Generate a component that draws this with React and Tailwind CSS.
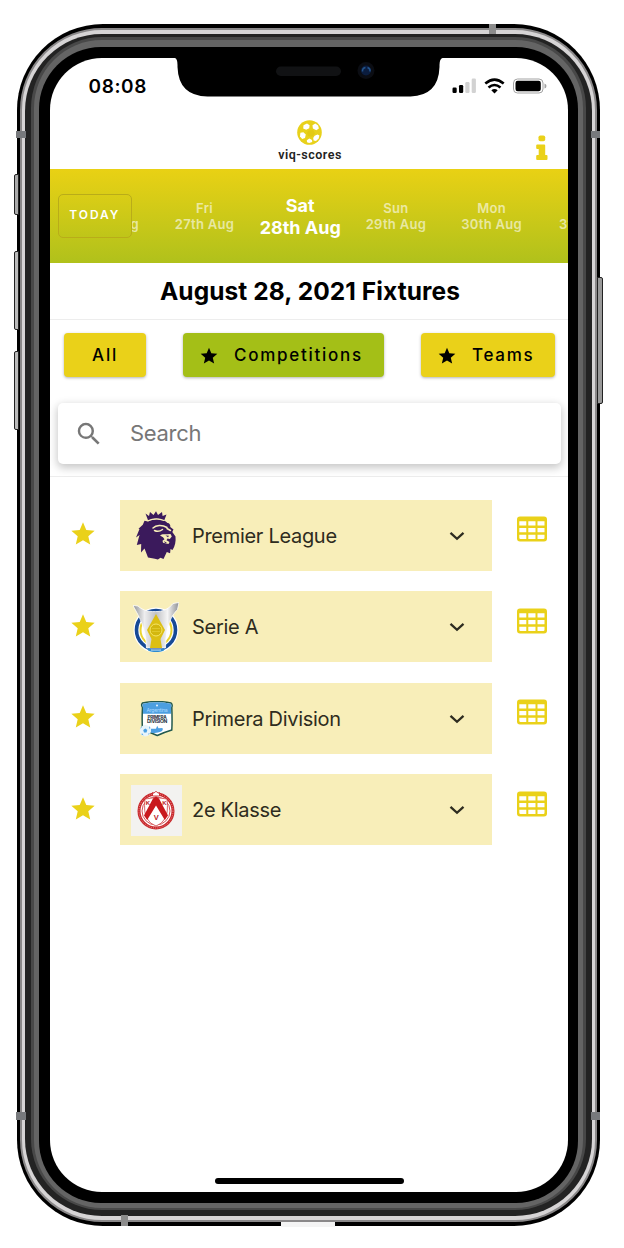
import React from "react";
import { MdStar, MdSearch } from "react-icons/md";

function BallLogo() {
  return (
    <svg viewBox="0 0 25 25" className="h-[25px] w-[25px]">
      <circle cx="12.5" cy="12.5" r="12.3" fill="#e8d11b" />
      <g fill="#fff">
        <path d="M6.500 5.200 10 3.400l2.600 1.800-.4 3-3 1.600-3-1.200z" />
        <path d="m15.500 5.200 2.800-1.600 2.800 2 .8 3-2.600 1.600-3.400-1.800z" />
        <path d="m3.400 12.800 3-.6 2.400 2.400-.8 3.400-2.800 1-2.200-2.600z" />
        <path d="m17.600 15.800 3-1.200 1.800.8-.8 3-2.600 2.600-2.400-.6-.4-2.400z" />
        <path d="m9.800 20.200 2.600-1.600 2.600 1.400.2 2-3 1-2.200-.8z" />
      </g>
      <path d="m11.500 10.500 4.500-.5 2 3.500-2.800 3.300-4.200-.8-1-3.200z" fill="#e3ca12" />
    </svg>
  );
}

function InfoIcon() {
  return (
    <svg viewBox="0 0 12 26" className="absolute top-[18.500px] right-[20px] h-[26px] w-[12px]" fill="#ead119">
      <rect x="2.500" y=".5" width="6.700" height="5.800" rx="1.800" />
      <path d="M1.200 9.500h7q1 0 1 1V20h1.300q1 0 1 1v3q0 1-1 1H1.200q-1 0-1-1v-3q0-1 1-1h1.500v-6H1.200q-1 0-1-1v-2.500q0-1 1-1z" />
    </svg>
  );
}

function ChevronDown() {
  return (
    <svg viewBox="0 0 16 10" className="mr-[27.500px] h-[10px] w-[16px]">
      <path d="m1.500 1.800 6.500 6 6.500-6" fill="none" stroke="#2e2c20" strokeWidth="2.300" />
    </svg>
  );
}

function PremierLogo() {
  return (
    <svg viewBox="0 0 40 49" className="h-[49px] w-[40px]">
      <g fill="#3b1a5c">
        <path d="M9.500 2.500 13 5l1-4 3.500 3L20 .2l2 3.800L26 1l.6 4 3.900-1.600-2.300 6.100c-5-2.400-11-2.200-16 .2z" />
        <path d="M12 10.500C18 7.200 27 7.300 31.500 12c2 .2 3 1.500 2.800 4l3.200 2.500-1.200 2.500 3.200 4.500c.5 5-.5 9.500-3 13.500l-2-1-.4 4.300-3.300-1.300-3.300 7-3-1.200-2.600 1.700-3-.8-6.900-1.200-3.500-9-3.500 4 .2-8.500L.8 34l2.700-10L0 26.500 3.500 18l-1-.2 4.300-4 1.700-4z" />
      </g>
      <g fill="none" stroke="#f8eeb8" strokeLinecap="round" strokeLinejoin="round">
        <path d="M12 9.800c5-2.400 11-2.500 16-.3" strokeWidth="1.200" />
        <path d="M17 17c3-3 9-3.600 14-.5M18.500 19.500c3 1.500 6 .5 8-1M31 17.500l3.500 2" strokeWidth="1.500" />
      </g>
      <path d="M24 24.500c2-2 4.500-1.200 7-1.200l3.500-.3 1.300 2.500-2 2.500-2.300-.5-1 1.700 3 1.800-1 2-5.500-1.200-.5-2 2-1.600-1.500-2z" fill="#f8eeb8" />
      <path d="m29.500 24.500 3.500.2-1 1.500zM28 30l3 2-2 0z" fill="#3b1a5c" />
    </svg>
  );
}

function SerieLogo() {
  return (
    <svg viewBox="0 0 46 50" className="h-[50px] w-[46px]">
      <defs>
        <linearGradient id="silver" x1="0" x2="1">
          <stop offset="0" stopColor="#8f9297" />
          <stop offset=".25" stopColor="#eeeeef" />
          <stop offset=".5" stopColor="#c0c1c4" />
          <stop offset=".75" stopColor="#f5f5f5" />
          <stop offset="1" stopColor="#8b8d92" />
        </linearGradient>
      </defs>
      <circle cx="23" cy="28" r="20" fill="#fff" stroke="#fff" strokeWidth="5" />
      <circle cx="23" cy="28" r="19.500" fill="none" stroke="#174a96" strokeWidth="3.600" />
      <circle cx="23" cy="28" r="15.500" fill="#fff" stroke="#ead432" strokeWidth="2" />
      <path d="M0 3.500 5 4c5 5 13 6 20 5.500 7-.5 12-4 15-8L46 .5l-1.500 7c-6 6.500-11.500 15-12 38.500h-19C13 30 9 20 3.500 10z" fill="url(#silver)" stroke="#fff" strokeWidth=".8" />
      <path d="m23 12 9 16-4.500 9 1.500 9H17l1.500-9L14 28z" fill="#dcbf14" />
      <circle cx="23" cy="28" r="6" fill="#d3b70f" stroke="#f5e567" strokeWidth="1" />
      <path d="M19 26.500h8M19 29.500h8" stroke="#e7d33c" strokeWidth=".6" />
      <path d="M15 46c5 2 11 2 16 0v2.500c-5 2-11 2-16 0z" fill="#2c8bd0" />
      <path d="M18 48h10" stroke="#fff" strokeWidth=".8" />
    </svg>
  );
}

function PrimeraLogo() {
  return (
    <svg viewBox="0 0 34 36" className="h-[36px] w-[34px]">
      <path d="M3.500 2Q18-1 32 2q1.800 1.500.8 4.500.5 14 0 22.500c-5 1.500-8 2.500-14.500 5.500C13 32 8 30.500 3.500 29c-.5-8-.4-16 0-22.500Q1.800 4 3.500 2z" fill="#fff" stroke="#22594e" strokeWidth="1.500" />
      <path d="M4 2.700Q18-.2 31.500 2.700q1.400 1.500.5 4v6H4v-6q-1-2.500 0-4z" fill="#4c9fe0" />
      <circle cx="18" cy="4.500" r="1" fill="#e5f4ff" />
      <text x="18" y="10.500" textAnchor="middle" fontSize="5.200" fill="#a9d8ff" fontFamily="Inter, sans-serif">Argentina</text>
      <text x="18" y="17.500" textAnchor="middle" textLength="19" lengthAdjust="spacingAndGlyphs" fontSize="4.800" fontWeight="700" fill="#26303c" fontFamily="Inter, sans-serif">PRIMERA</text>
      <text x="18" y="21.800" textAnchor="middle" textLength="20" lengthAdjust="spacingAndGlyphs" fontSize="4.800" fontWeight="700" fill="#26303c" fontFamily="Inter, sans-serif">DIVISION</text>
      <path d="M12 27.800h5l1.200-3 1.300 2.500 4-.2.300 1.800-1.500 1.700q-6 2.500-10.500.8z" fill="#4b9ee2" />
      <circle cx="6.300" cy="29.700" r="5.700" fill="#e7f4fb" />
      <path d="m6.300 27.500 2 1.600-.8 2.400H5l-.8-2.400zM1 28l1.500-1.500L3 24.500M10 25l1.500 2-1 1zM2 33l1.500-.5 1 2zM9 34l.5-1.500 1.500-.5z" fill="#499fe1" />
    </svg>
  );
}

function KlasseLogo() {
  return (
    <div className="flex h-[51px] w-[51px] items-center justify-center bg-[#f3f2f0]">
      <svg viewBox="0 0 38 40" className="h-[40px] w-[38px]">
        <circle cx="19" cy="21" r="17" fill="#fff" stroke="#c9282c" strokeWidth="3" />
        <circle cx="19" cy="21" r="17" fill="none" stroke="#f0b4b2" strokeWidth=".7" strokeDasharray="1 1.200" />
        <circle cx="19" cy="21" r="14" fill="none" stroke="#c9282c" strokeWidth=".8" />
        <path d="M15.500 6V2.500l1.500.7 2-2 2 2 1.500-.7V6z" fill="#fff" stroke="#c9282c" strokeWidth=".9" />
        <path d="M8 9q11-3 22 0 1.500 14-2 19.500Q25 34 19 36q-6-2-9-7.500Q6.500 23 8 9z" fill="#fff" stroke="#c9282c" strokeWidth=".7" />
        <path d="m16 8.500 3-2 3 2 9 17-3.200 4.500L19 15.500 10.200 30 7 25.500z" fill="#c9191e" />
        <g fill="#b92025" fontFamily="Liberation Sans, sans-serif" fontWeight="700" textAnchor="middle">
          <text x="10.800" y="15" fontSize="6">K</text>
          <text x="27.200" y="15" fontSize="6">K</text>
          <text x="19" y="29.500" fontSize="7.500">V</text>
        </g>
      </svg>
    </div>
  );
}

function TableIcon() {
  return (
    <svg viewBox="0 0 30 26" className="h-[26px] w-[30px]">
      <rect x="0" y=".5" width="30" height="25" rx="3" fill="#ead119" />
      <g fill="#fff">
        <path d="M2.300 5.200h7v4.300h-7zM11.300 5.200h7.200v4.300h-7.200zM20.500 5.200h7v4.300h-7z" />
        <path d="M2.300 12h7v4.300h-7zM11.300 12h7.200v4.300h-7.200zM20.500 12h7v4.300h-7z" />
        <path d="M2.300 18.700h7V23H3.500q-1.200 0-1.200-1.200zM11.300 18.700h7.200V23h-7.200zM20.500 18.700h7v3.100q0 1.200-1.200 1.200h-5.800z" />
      </g>
    </svg>
  );
}

const days = [
  { day: "Thu", date: "26th Aug" },
  { day: "Fri", date: "27th Aug" },
  { day: "Sat", date: "28th Aug", active: true },
  { day: "Sun", date: "29th Aug" },
  { day: "Mon", date: "30th Aug" },
  { day: "Tue", date: "31st Aug" },
];

const leagues = [
  { name: "Premier League", Logo: PremierLogo },
  { name: "Serie A", Logo: SerieLogo },
  { name: "Primera Division", Logo: PrimeraLogo },
  { name: "2e Klasse", Logo: KlasseLogo },
];

function StatusBar() {
  return (
    <div className="relative h-[58px] shrink-0">
      <svg viewBox="0 0 518 58" className="absolute top-0 left-0 h-[58px] w-[518px]">
        <path d="M123 0h2q2.500 1 2.500 7v2q1 29 30 29.500h203q28-1 29-29.500V7q0-6 3-7z" fill="#000" />
        <rect x="226" y="8.500" width="65" height="9.500" rx="4.750" fill="#111214" />
        <circle cx="316" cy="12.500" r="8.500" fill="#0b0d13" />
        <circle cx="316" cy="12.500" r="5" fill="#0b1d3f" />
        <path d="M312.500 13.500a3.800 3.800 0 0 1 3-4M317.500 9.500q3 1 2.500 4" fill="none" stroke="#23538a" strokeWidth="1.500" />
        <rect x="402.500" y="29.500" width="4.200" height="5.500" rx="1.200" />
        <rect x="409" y="27" width="4.200" height="8" rx="1.200" />
        <rect x="415.300" y="24" width="4.200" height="11" rx="1.200" fill="#d2d2d2" />
        <rect x="421.700" y="20.500" width="4.200" height="14.500" rx="1.200" fill="#d2d2d2" />
        <g fill="none" stroke="#000" strokeWidth="2.600">
          <path d="M435.300 25.500q9.200-7.800 18.400 0" />
          <path d="M438.500 29.500q6-5 12 0" />
        </g>
        <path d="m441.300 32.200q3.200-2.200 6.400 0l-3.200 3.300z" />
        <rect x="463.500" y="21" width="29.500" height="14" rx="4" fill="#fff" stroke="#a3a3a3" strokeWidth="1" />
        <rect x="465.500" y="22.700" width="25.300" height="10.600" rx="2.200" />
        <path d="M494.500 25.500q2 .5 2 2.500t-2 2.500z" fill="#a3a3a3" />
      </svg>
      <span className="absolute top-[17px] left-[38.500px] text-[19px] leading-[24px] font-semibold tracking-[0.600px]">08:08</span>
    </div>
  );
}

function Screen() {
  return (
    <div className="flex h-[1134px] w-[518px] flex-col overflow-hidden rounded-[52px] bg-white text-black">
      <StatusBar />
      <header className="relative flex h-[53px] shrink-0 flex-col items-center pt-[4px]">
        <BallLogo />
        <span className="mt-[2px] ml-[2px] font-['Roboto',sans-serif] text-[12.500px] leading-[16px] font-semibold tracking-[0.500px] text-[#222]">viq-scores</span>
        <InfoIcon />
      </header>
      <div className="relative h-[94px] shrink-0 bg-linear-to-b from-[#e9d114] to-[#b0c11b]">
        <div className="flex h-full w-[600px] pl-[11px]">
          {days.map((d) => (
            <div
              key={d.date}
              className={
                d.active
                  ? "flex w-[95.700px] shrink-0 flex-col items-center pt-[25.500px] text-[18px] leading-[22px] font-bold whitespace-nowrap text-white"
                  : "flex w-[95.700px] shrink-0 flex-col items-center pt-[31px] text-[13px] leading-[16px] font-semibold tracking-[0.3px] whitespace-nowrap text-white/60"
              }
            >
              <span>{d.day}</span>
              <span>{d.date}</span>
            </div>
          ))}
        </div>
        <button className="absolute top-[25px] left-[8px] h-[44px] w-[73.500px] rounded-[5px] border border-[#b9ac19] bg-linear-to-b from-[#dacd16] to-[#bfc519] pb-[2px] text-[12px] font-semibold tracking-[1.900px] text-white">
          TODAY
        </button>
      </div>
      <h1 className="flex h-[57px] shrink-0 items-center justify-center border-b border-[#ededed] pt-px pl-[2px] text-[24.500px] font-bold tracking-[0.080px] whitespace-nowrap">
        August 28, 2021 Fixtures
      </h1>
      <div className="flex h-[76px] shrink-0 items-start justify-between pt-[13px] pr-[13px] pl-[14px] text-[17px] font-medium tracking-[1.720px] whitespace-nowrap">
        <button className="h-[44px] w-[82px] rounded-[4px] bg-[#ead119] pt-[2px] shadow-[0_1px_3px_rgba(0,0,0,0.3)]">All</button>
        <button className="flex h-[44px] w-[201px] items-center rounded-[4px] bg-[#a4bf17] pt-[2px] pl-[16px] shadow-[0_1px_3px_rgba(0,0,0,0.3)]">
          <MdStar className="mr-[15px] h-[20px] w-[20px]" />
          Competitions
        </button>
        <button className="flex h-[44px] w-[134px] items-center rounded-[4px] bg-[#ead119] pt-[2px] pl-[16px] shadow-[0_1px_3px_rgba(0,0,0,0.3)]">
          <MdStar className="mr-[15px] h-[20px] w-[20px]" />
          Teams
        </button>
      </div>
      <div className="h-[81px] shrink-0 border-b border-[#ededed] pt-[7px] pr-[7px] pl-[8px]">
        <div className="flex h-[61px] items-center rounded-[5px] bg-white pl-[16px] text-[22px] tracking-[-0.300px] text-[#777] shadow-[0_3px_8px_1px_rgba(0,0,0,0.22)]">
          <MdSearch className="mr-[26px] h-[30px] w-[30px]" />
          Search
        </div>
      </div>
      <div className="flex flex-col gap-[20.500px] pt-[22.700px]">
        {leagues.map(({ name, Logo }) => (
          <div key={name} className="flex h-[71px] items-center">
            <MdStar className="mb-[2px] ml-[18.500px] h-[28px] w-[28px] text-[#ead119]" />
            <div className="ml-[23.500px] flex h-[71px] w-[372px] items-center bg-[#f8eeb9] pt-[1.500px] text-[20px] tracking-[-0.300px] text-[#2e2c20]">
              <div className="flex w-[72px] shrink-0 justify-center">
                <Logo />
              </div>
              <span className="grow whitespace-nowrap">{name}</span>
              <ChevronDown />
            </div>
            <div className="mb-[11.500px] ml-[25px]">
              <TableIcon />
            </div>
          </div>
        ))}
      </div>
      <div className="mt-auto mb-[8px] h-[6px] w-[189px] shrink-0 self-center rounded-full bg-black" />
    </div>
  );
}

export default function App() {
  return (
    <div className="relative h-[1248px] w-[624px] overflow-hidden bg-white pt-[24px] pl-[16.500px] font-['Inter',sans-serif]">
      <div className="absolute top-[174px] left-[14px] h-[41px] w-[5px] rounded-l-[2px] border border-[#222] bg-[#aaa]" />
      <div className="absolute top-[251px] left-[14px] h-[79px] w-[5px] rounded-l-[2px] border border-[#222] bg-[#bbb]" />
      <div className="absolute top-[351px] left-[14px] h-[79px] w-[5px] rounded-l-[2px] border border-[#222] bg-[#bbb]" />
      <div className="absolute top-[277px] left-[597px] h-[127px] w-[6px] rounded-r-[2px] border border-[#222] bg-[#999]" />
      <div className="h-[1202px] w-[583px] rounded-[86px] bg-black pt-[4px] pl-[3.500px]">
        <div className="h-[1194px] w-[577px] rounded-[82px] border-2 border-[#8a8889] bg-[#d6d4d5] pt-[4px] pl-[3px]">
          <div className="h-[1182px] w-[567px] rounded-[77px] bg-[#232323] pt-[3px] pl-[6px]">
            <div className="h-[1173px] w-[555px] rounded-[71px] bg-[#484848] pt-[3px] pl-[3px]">
              <div className="h-[1168px] w-[549px] rounded-[68px] bg-[#646464] pt-[7px] pl-[5px]">
                <div className="h-[1156px] w-[539px] rounded-[62px] bg-black pt-[11px] pl-[11px]">
                  <Screen />
                </div>
              </div>
            </div>
          </div>
        </div>
      </div>
      <div className="absolute top-[24px] left-[489px] h-[10px] w-[7px] bg-[#8c8c8c]" />
      <div className="absolute top-[131px] left-[16px] h-[7px] w-[10px] bg-[#77797c]" />
      <div className="absolute top-[131px] left-[591px] h-[7px] w-[9px] bg-[#77797c]" />
      <div className="absolute top-[1112px] left-[16px] h-[8px] w-[10px] bg-[#77797c]" />
      <div className="absolute top-[1112px] left-[591px] h-[8px] w-[9px] bg-[#77797c]" />
      <div className="absolute top-[1215px] left-[121px] h-[11px] w-[7px] bg-[#8c8c8c]" />
      <div className="absolute top-[1222px] left-[281px] h-[5px] w-[54px] bg-[#f4f4f4]" />
    </div>
  );
}
